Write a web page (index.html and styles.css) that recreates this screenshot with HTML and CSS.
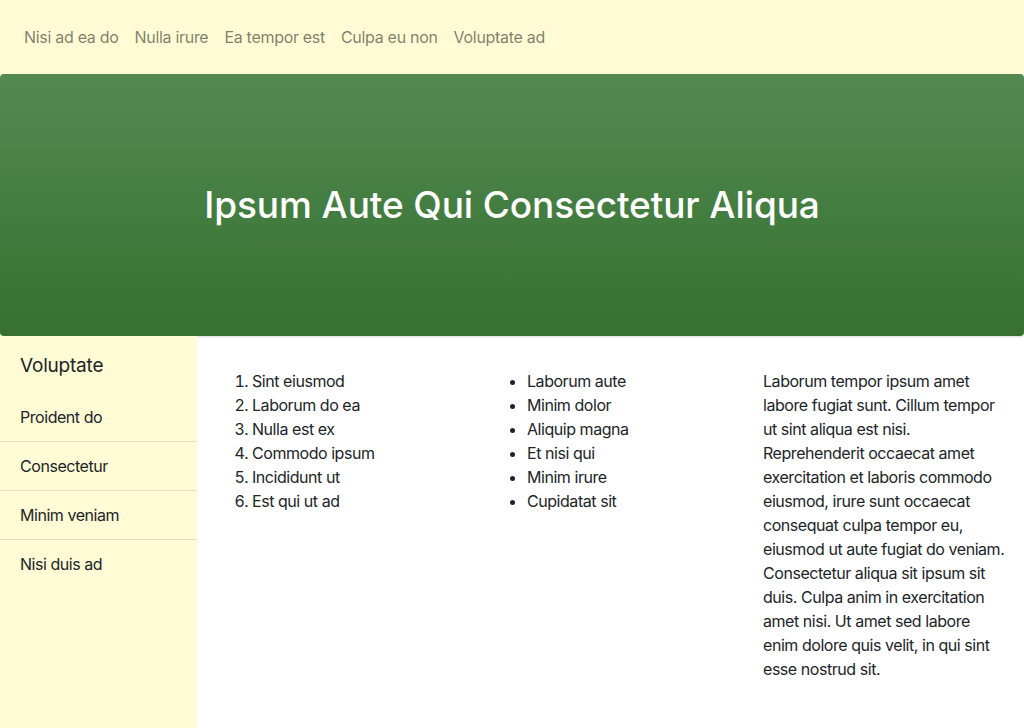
FILE: index.html
```html
<!DOCTYPE html>
<html lang="en">
<head>
<meta charset="utf-8">
<title>Page</title>
<link rel="stylesheet" href="styles.css">
</head>
<body>
<nav class="topnav">
  <a class="nav-link" href="#">Nisi ad ea do</a>
  <a class="nav-link" href="#">Nulla irure</a>
  <a class="nav-link" href="#">Ea tempor est</a>
  <a class="nav-link" href="#">Culpa eu non</a>
  <a class="nav-link" href="#">Voluptate ad</a>
</nav>
<header class="hero">
  <h1 class="hero-title">Ipsum Aute Qui Consectetur Aliqua</h1>
</header>
<div class="layout">
  <aside class="sidebar">
    <h2 class="side-heading">Voluptate</h2>
    <ul class="side-list">
      <li class="side-item">Proident do</li>
      <li class="side-item">Consectetur</li>
      <li class="side-item">Minim veniam</li>
      <li class="side-item">Nisi duis ad</li>
    </ul>
  </aside>
  <main class="content">
    <ol class="col list">
      <li>Sint eiusmod</li>
      <li>Laborum do ea</li>
      <li>Nulla est ex</li>
      <li>Commodo ipsum</li>
      <li>Incididunt ut</li>
      <li>Est qui ut ad</li>
    </ol>
    <ul class="col list">
      <li>Laborum aute</li>
      <li>Minim dolor</li>
      <li>Aliquip magna</li>
      <li>Et nisi qui</li>
      <li>Minim irure</li>
      <li>Cupidatat sit</li>
    </ul>
    <p class="col para">Laborum tempor ipsum amet labore fugiat sunt. Cillum tempor ut sint aliqua est nisi. Reprehenderit occaecat amet exercitation et laboris commodo eiusmod, irure sunt occaecat consequat culpa tempor eu, eiusmod ut aute fugiat do veniam. Consectetur aliqua sit ipsum sit duis. Culpa anim in exercitation amet nisi. Ut amet sed labore enim dolore quis velit, in qui sint esse nostrud sit.</p>
  </main>
</div>
</body>
</html>
```

FILE: styles.css
```css
* { box-sizing: border-box; }
html, body { margin: 0; padding: 0; }
body {
  font-family: Inter, "Liberation Sans", sans-serif;
  font-size: 16px;
  line-height: 24px;
  letter-spacing: -0.45px;
  color: #212529;
  background: #fff;
  height: 728px;
  display: flex;
  flex-direction: column;
}
.topnav {
  height: 74px;
  background: #fffcd5;
  display: flex;
  align-items: center;
  padding: 0 8px 0 16px;
  flex-shrink: 0;
}
.nav-link {
  color: rgba(0, 0, 0, 0.52);
  text-decoration: none;
  padding: 0 8px;
  font-size: 16px;
  letter-spacing: -0.3px;
}
.hero {
  height: 262px;
  flex-shrink: 0;
  background: linear-gradient(to bottom, #538a53, #36712f);
  border-radius: 4px;
  box-shadow: 0 1px 2px rgba(0, 0, 0, 0.15);
  display: flex;
  align-items: center;
  justify-content: center;
}
.hero-title {
  margin: 0;
  color: #fff;
  font-size: 37px;
  font-weight: 500;
  line-height: 1.2;
  letter-spacing: -0.1px;
}
.layout {
  flex: 1;
  display: flex;
}
.sidebar {
  width: 197px;
  flex-shrink: 0;
  background: #fffcd5;
}
.side-heading {
  margin: 0;
  padding: 18px 20px 15px;
  font-size: 19px;
  font-weight: 400;
  line-height: 24px;
  letter-spacing: -0.2px;
}
.side-list {
  list-style: none;
  margin: 0;
  padding: 0;
}
.side-item {
  padding: 12px 20px;
  border-bottom: 1px solid #e3dfc0;
}
.side-item:last-child { border-bottom: none; }
.content {
  flex: 1;
  padding: 17px 16px 16px;
  display: grid;
  grid-template-columns: repeat(3, 1fr);
  column-gap: 30px;
  align-items: start;
}
.list {
  margin: 16px 0;
  padding-left: 39px;
}
.para {
  margin: 16px 0;
}
```
